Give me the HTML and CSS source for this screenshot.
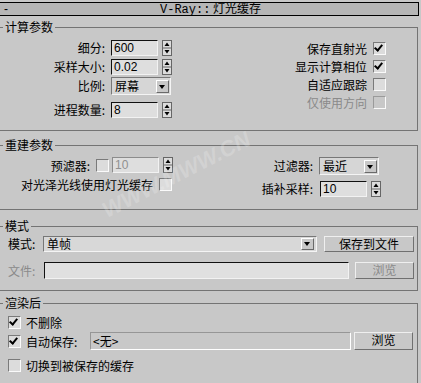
FILE: index.html
```html
<!DOCTYPE html>
<html lang="zh">
<head>
  <meta charset="UTF-8" />
  <title>V-Ray:: 灯光缓存</title>
  <link rel="stylesheet" href="styles.css">
</head>
<body>
<div class="rollout">
  <div class="titlebar">
    <span class="minus">-</span>
    <span class="title"><span class="mono">V-Ray::</span> 灯光缓存</span>
  </div>

  <fieldset class="group g-calc">
    <legend>计算参数</legend>
    <div class="cols">
      <div class="col-left">
        <div class="row">
          <span class="lbl">细分:</span>
          <div class="input">600</div>
          <svg class="spin" width="10" height="16" viewBox="0 0 10 16"><rect x="0.5" y="0.5" width="9" height="15" fill="#dcdcdc" stroke="#666"/><line x1="1" y1="8" x2="9" y2="8" stroke="#666"/><path d="M5 2.5L7.5 6H2.5Z" fill="#000"/><path d="M5 13.5L7.5 10H2.5Z" fill="#000"/></svg>
        </div>
        <div class="row">
          <span class="lbl">采样大小:</span>
          <div class="input">0.02</div>
          <svg class="spin" width="10" height="16" viewBox="0 0 10 16"><rect x="0.5" y="0.5" width="9" height="15" fill="#dcdcdc" stroke="#666"/><line x1="1" y1="8" x2="9" y2="8" stroke="#666"/><path d="M5 2.5L7.5 6H2.5Z" fill="#000"/><path d="M5 13.5L7.5 10H2.5Z" fill="#000"/></svg>
        </div>
        <div class="row">
          <span class="lbl">比例:</span>
          <div class="select sm"><span>屏幕</span><span class="arrow"></span></div>
        </div>
        <div class="row gap-top">
          <span class="lbl">进程数量:</span>
          <div class="input">8</div>
          <svg class="spin" width="10" height="16" viewBox="0 0 10 16"><rect x="0.5" y="0.5" width="9" height="15" fill="#dcdcdc" stroke="#666"/><line x1="1" y1="8" x2="9" y2="8" stroke="#666"/><path d="M5 2.5L7.5 6H2.5Z" fill="#000"/><path d="M5 13.5L7.5 10H2.5Z" fill="#000"/></svg>
        </div>
      </div>
      <div class="col-right">
        <div class="check-row"><span>保存直射光</span><span class="cb checked"></span></div>
        <div class="check-row"><span>显示计算相位</span><span class="cb checked"></span></div>
        <div class="check-row"><span>自适应跟踪</span><span class="cb"></span></div>
        <div class="check-row disabled"><span>仅使用方向</span><span class="cb"></span></div>
      </div>
    </div>
  </fieldset>

  <fieldset class="group g-rebuild">
    <legend>重建参数</legend>
    <div class="cols">
      <div class="col-left2">
        <div class="row">
          <span>预滤器:</span>
          <span class="cb prefilter"></span>
          <div class="input dim">10</div>
          <svg class="spin" width="10" height="16" viewBox="0 0 10 16"><rect x="0.5" y="0.5" width="9" height="15" fill="#dcdcdc" stroke="#666"/><line x1="1" y1="8" x2="9" y2="8" stroke="#666"/><path d="M5 2.5L7.5 6H2.5Z" fill="#000"/><path d="M5 13.5L7.5 10H2.5Z" fill="#000"/></svg>
        </div>
        <div class="row">
          <span>对光泽光线使用灯光缓存</span>
          <span class="cb glossy"></span>
        </div>
      </div>
      <div class="col-right2">
        <span class="lbl2">过滤器:</span>
        <div class="select md"><span>最近</span><span class="arrow"></span></div>
        <span class="lbl2">插补采样:</span>
        <div class="row">
          <div class="input">10</div>
          <svg class="spin" width="10" height="16" viewBox="0 0 10 16"><rect x="0.5" y="0.5" width="9" height="15" fill="#dcdcdc" stroke="#666"/><line x1="1" y1="8" x2="9" y2="8" stroke="#666"/><path d="M5 2.5L7.5 6H2.5Z" fill="#000"/><path d="M5 13.5L7.5 10H2.5Z" fill="#000"/></svg>
        </div>
      </div>
    </div>
  </fieldset>

  <fieldset class="group g-mode">
    <legend>模式</legend>
    <div class="mode-row">
      <span class="mode-lbl">模式:</span>
      <div class="select wide"><span>单帧</span><span class="arrow"></span></div>
      <div class="btn save">保存到文件</div>
    </div>
    <div class="mode-row file-row">
      <span class="mode-lbl disabled">文件:</span>
      <div class="input file"></div>
      <div class="btn browse disabled">浏览</div>
    </div>
  </fieldset>

  <fieldset class="group g-after">
    <legend>渲染后</legend>
    <div class="after-row"><span class="cb checked"></span><span>不删除</span></div>
    <div class="after-row auto">
      <span class="cb checked"></span><span class="auto-lbl">自动保存:</span>
      <div class="field">&lt;无&gt;</div>
      <div class="btn browse">浏览</div>
    </div>
    <div class="after-row last"><span class="cb"></span><span>切换到被保存的缓存</span></div>
  </fieldset>

  <div class="watermark">WWW.MWW.CN</div>
</div>
</body>
</html>
```

FILE: styles.css
```css
body {
    margin: 0;
    background-color: #c8c8c8;
    font-family: "Noto Sans CJK SC", "Liberation Sans", sans-serif;
    font-size: 12px;
    color: #000;
    overflow: hidden;
}

.rollout {
    position: relative;
    width: 419px;
    height: 383px;
    padding-top: 2px;
    box-sizing: border-box;
}

.titlebar {
    display: flex;
    align-items: center;
    height: 14px;
    box-sizing: border-box;
    border: 1px solid #000;
    border-left: none;
    background-color: #b6b6b6;
    line-height: 12px;
}

.minus {
    width: 12px;
    padding-left: 4px;
    font-family: "Liberation Sans", sans-serif;
}

.title {
    margin-left: 144px;
}

.mono {
    font-family: "Liberation Mono", monospace;
    font-size: 12px;
}

/* group boxes */
.group {
    margin: 0;
    padding: 0;
    width: 418px;
    box-sizing: border-box;
    border: 1px solid #747474;
    border-left: none;
    min-inline-size: 0;
}

.group legend {
    margin-left: 3px;
    padding: 0 2px;
    height: 14px;
    line-height: 14px;
}

.g-calc { margin-top: 4px; height: 111px; padding-top: 6px; }
.g-rebuild { margin-top: 7px; height: 72px; padding-top: 5px; }
.g-mode { margin-top: 9px; height: 72px; padding-top: 3px; }
.g-after { margin-top: 5px; height: 100px; padding-top: 6px; }

.cols {
    display: flex;
    justify-content: space-between;
}

.row {
    display: flex;
    align-items: center;
}

.col-left .row {
    height: 16px;
    margin-bottom: 3px;
}

.col-left .row.gap-top {
    margin-top: 8px;
}

.lbl {
    width: 105px;
    margin-right: 6px;
    text-align: right;
    line-height: 14px;
}

.input {
    width: 47px;
    height: 16px;
    box-sizing: border-box;
    border-top: 1px solid #111;
    border-left: 1px solid #111;
    border-right: 1px solid #f2f2f2;
    border-bottom: 1px solid #f2f2f2;
    background-color: #dedede;
    font-family: "Liberation Sans", sans-serif;
    font-size: 12px;
    line-height: 14px;
    padding-left: 2px;
}

.input.dim {
    color: #909090;
    border-top-color: #8c8c8c;
    border-left-color: #8c8c8c;
}

.spin {
    display: block;
    margin-left: 4px;
}

.select {
    display: flex;
    align-items: center;
    justify-content: space-between;
    height: 18px;
    box-sizing: border-box;
    border-top: 1px solid #777;
    border-left: 1px solid #777;
    border-right: 1px solid #f4f4f4;
    border-bottom: 1px solid #f4f4f4;
    background-color: #d6d6d6;
    padding-left: 3px;
    line-height: 14px;
}

.select.sm { width: 60px; }
.select.md { width: 60px; }
.select.wide { width: 274px; height: 16px; background-color: #d8d8d8; }

.arrow {
    position: relative;
    width: 13px;
    height: 13px;
    margin-right: 1px;
    box-sizing: border-box;
    border-top: 1px solid #fff;
    border-left: 1px solid #fff;
    border-right: 1px solid #6a6a6a;
    border-bottom: 1px solid #6a6a6a;
    background-color: #c8c8c8;
}

.arrow::after {
    content: "";
    position: absolute;
    left: 2px;
    top: 4px;
    border-left: 3.5px solid transparent;
    border-right: 3.5px solid transparent;
    border-top: 4px solid #000;
}

.select.wide .arrow { margin-right: 2px; height: 12px; }
.select.wide .arrow::after { top: 3px; }

.col-right {
    padding-right: 31px;
    padding-top: 2px;
}

.check-row {
    display: flex;
    justify-content: flex-end;
    align-items: center;
    height: 13px;
    margin-bottom: 5px;
    line-height: 13px;
}

.check-row .cb {
    margin-left: 6px;
}

.disabled {
    color: #8a8a8a;
}

.cb {
    position: relative;
    display: inline-block;
    width: 13px;
    height: 13px;
    box-sizing: border-box;
    border-top: 1px solid #7a7a7a;
    border-left: 1px solid #7a7a7a;
    border-right: 1px solid #fafafa;
    border-bottom: 1px solid #fafafa;
    background-color: #dcdcdc;
    flex-shrink: 0;
}

.disabled .cb {
    background-color: #c8c8c8;
    border-top-color: #9a9a9a;
    border-left-color: #9a9a9a;
}

.cb.checked::after {
    content: "";
    position: absolute;
    left: 2px;
    top: 0px;
    width: 3px;
    height: 6px;
    border-right: 2px solid #000;
    border-bottom: 2px solid #000;
    transform: rotate(40deg);
}

/* rebuild group */
.col-left2 {
    width: 173px;
    display: flex;
    flex-direction: column;
    align-items: flex-end;
}

.col-left2 .row {
    height: 16px;
    margin-bottom: 2px;
}

.col-left2 .row:last-child {
    margin-top: 1px;
}

.cb.prefilter {
    margin-left: 6px;
    margin-right: 3px;
}

.cb.glossy {
    margin-left: 6px;
    margin-right: 1px;
}

.col-right2 {
    display: grid;
    grid-template-columns: auto auto;
    column-gap: 6px;
    row-gap: 6px;
    align-items: center;
    padding-right: 36px;
}

.lbl2 {
    text-align: right;
    line-height: 14px;
}

.col-right2 .row .input {
    margin-left: 1px;
}

/* mode group */
.mode-row {
    display: flex;
    align-items: center;
    height: 16px;
}

.mode-lbl {
    width: 35px;
    padding-left: 8px;
    line-height: 14px;
}

.file-row {
    margin-top: 10px;
    height: 17px;
}

.file-row .mode-lbl {
    width: 36px;
}

.input.file {
    width: 305px;
    height: 17px;
    background-color: #e0e0e0;
}

.btn {
    height: 16px;
    box-sizing: border-box;
    border-top: 1px solid #efefef;
    border-left: 1px solid #efefef;
    border-right: 1px solid #707070;
    border-bottom: 1px solid #707070;
    background-color: #c8c8c8;
    text-align: center;
    line-height: 14px;
}

.btn.save {
    width: 90px;
    margin-left: 7px;
}

.btn.browse {
    width: 59px;
    margin-left: 6px;
    height: 17px;
}

/* after render group */
.after-row {
    display: flex;
    align-items: center;
    height: 13px;
    padding-left: 8px;
    line-height: 13px;
}

.after-row .cb {
    margin-right: 5px;
}

.after-row.auto {
    height: 18px;
    margin-top: 3px;
}

.auto-lbl {
    width: 64px;
}

.field {
    width: 261px;
    height: 18px;
    box-sizing: border-box;
    border-top: 1px solid #969696;
    border-left: 1px solid #969696;
    border-right: 1px solid #fff;
    border-bottom: 1px solid #fff;
    padding-left: 2px;
    line-height: 15px;
}

.after-row.auto .btn.browse {
    margin-left: 3px;
    height: 18px;
}

.after-row.last {
    margin-top: 9px;
}

.watermark {
    position: absolute;
    left: 95px;
    top: 162px;
    font-family: "Liberation Sans", sans-serif;
    font-size: 22px;
    font-weight: bold;
    font-style: italic;
    color: rgba(255, 255, 255, 0.2);
    transform: rotate(-27deg);
    pointer-events: none;
}
```
